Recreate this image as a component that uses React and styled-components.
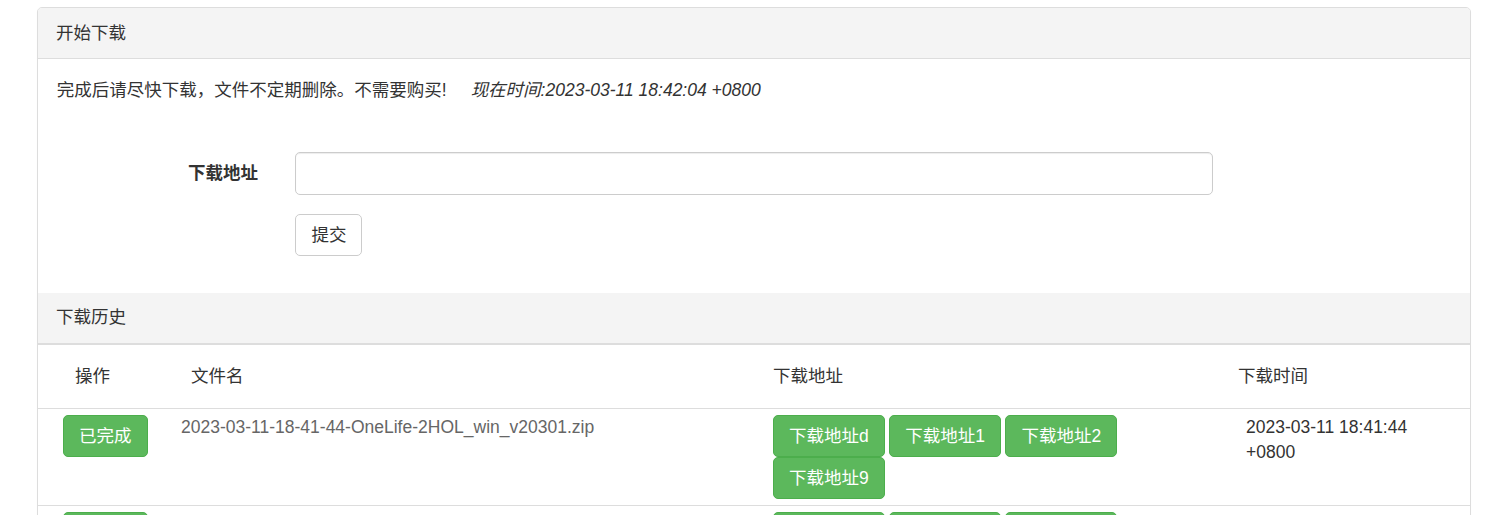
import React from "react";
import styled, { createGlobalStyle } from "styled-components";

const GlobalStyle = createGlobalStyle`
  body {
    margin: 0;
    background: #fff;
    font-family: "Liberation Sans", Arial, "Noto Sans CJK SC", sans-serif;
    font-size: 17.5px;
    line-height: 25px;
    color: #333;
  }
  * { box-sizing: border-box; }
`;

const Page = styled.div`
  padding: 7px 30px 0 37px;
`;

const Panel = styled.div`
  border: 1px solid #ddd;
  border-radius: 5px;
  background: #fff;
  box-shadow: 0 1px 1px rgba(0, 0, 0, 0.05);
`;

const PanelHeading = styled.div`
  padding: 12.5px 18px;
  background: #f4f4f4;
  color: #333;
  border-bottom: ${(p) => (p.$thick ? "2px" : "1px")} solid #ddd;
  border-radius: ${(p) => (p.$first ? "4px 4px 0 0" : "0")};
`;

const PanelBody = styled.div`
  padding: 19px 18.75px 17px;
`;

const Notice = styled.p`
  margin: 0 0 49px;
`;

const Now = styled.em`
  margin-left: 24px;
`;

const FormRow = styled.div`
  display: grid;
  grid-template-columns: 16.6667% 66.6667%;
  margin: 0 -18.75px 19.5px;
`;

const Label = styled.label`
  padding: 8.75px 18.75px 0;
  text-align: right;
  font-weight: bold;
`;

const Field = styled.div`
  grid-column: 2;
  padding: 0 18.75px;
`;

const Input = styled.input`
  display: block;
  width: 100%;
  height: 42.5px;
  padding: 7.5px 15px;
  font: inherit;
  border: 1px solid #ccc;
  border-radius: 5px;
  box-shadow: inset 0 1px 1px rgba(0, 0, 0, 0.075);
  outline: none;
`;

const Btn = styled.button`
  display: inline-block;
  padding: 7.5px 15px;
  font: inherit;
  line-height: 25px;
  border-radius: 5px;
  border: 1px solid ${(p) => (p.$success ? "#4cae4c" : "#ccc")};
  background: ${(p) => (p.$success ? "#5cb85c" : "#fff")};
  color: ${(p) => (p.$success ? "#fff" : "#333")};
  cursor: pointer;
  white-space: nowrap;
`;

const Table = styled.table`
  width: 100%;
  border-collapse: collapse;
  table-layout: fixed;
`;

const Th = styled.th`
  text-align: left;
  font-weight: normal;
  padding: 19px 0 19.5px ${(p) => p.$pl}px;
  border-bottom: 1px solid #ddd;
`;

const Td = styled.td`
  vertical-align: top;
  padding: 6px 18px 6px ${(p) => p.$pl}px;
  border-top: 1px solid #ddd;
  color: ${(p) => (p.$muted ? "#666" : "#333")};
`;

const Links = styled.div`
  display: flex;
  flex-wrap: wrap;
  column-gap: 4.5px;
`;

const rows = [
  {
    name: "2023-03-11-18-41-44-OneLife-2HOL_win_v20301.zip",
    links: ["下载地址d", "下载地址1", "下载地址2", "下载地址9"],
    time: "2023-03-11 18:41:44 +0800",
  },
  {
    name: "2023-03-11-18-30-12-OneLife-2HOL_linux_v20301.zip",
    links: ["下载地址d", "下载地址1", "下载地址2", "下载地址9"],
    time: "2023-03-11 18:30:12 +0800",
  },
];

export default function App() {
  return (
    <Page>
      <GlobalStyle />
      <Panel>
        <PanelHeading $first>开始下载</PanelHeading>
        <PanelBody>
          <Notice>
            完成后请尽快下载，文件不定期删除。不需要购买!
            <Now>现在时间:2023-03-11 18:42:04 +0800</Now>
          </Notice>
          <form onSubmit={(e) => e.preventDefault()}>
            <FormRow>
              <Label htmlFor="url">下载地址</Label>
              <Field>
                <Input id="url" type="text" />
              </Field>
            </FormRow>
            <FormRow>
              <Field>
                <Btn type="submit">提交</Btn>
              </Field>
            </FormRow>
          </form>
        </PanelBody>
        <PanelHeading $thick>下载历史</PanelHeading>
        <Table>
          <colgroup>
            <col style={{ width: "128px" }} />
            <col style={{ width: "592px" }} />
            <col style={{ width: "470px" }} />
            <col />
          </colgroup>
          <thead>
            <tr>
              <Th $pl={37}>操作</Th>
              <Th $pl={25}>文件名</Th>
              <Th $pl={15}>下载地址</Th>
              <Th $pl={10}>下载时间</Th>
            </tr>
          </thead>
          <tbody>
            {rows.map((r, i) => (
              <tr key={i}>
                <Td $pl={25}>
                  <Btn $success>已完成</Btn>
                </Td>
                <Td $pl={15} $muted>
                  {r.name}
                </Td>
                <Td $pl={15}>
                  <Links>
                    {r.links.map((l) => (
                      <Btn $success key={l}>
                        {l}
                      </Btn>
                    ))}
                  </Links>
                </Td>
                <Td $pl={18}>{r.time}</Td>
              </tr>
            ))}
          </tbody>
        </Table>
      </Panel>
    </Page>
  );
}
